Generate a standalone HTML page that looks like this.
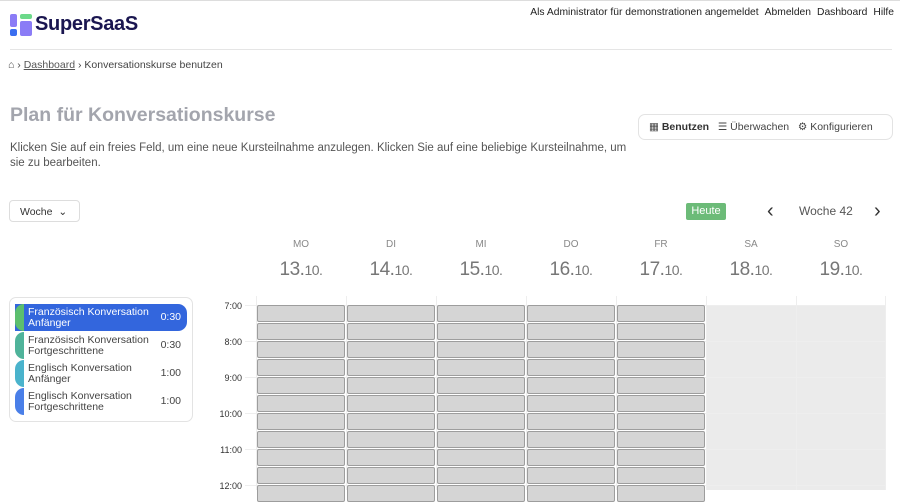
<!DOCTYPE html>
<html><head><meta charset="utf-8"><style>
*{box-sizing:border-box;margin:0;padding:0}
body{width:900px;height:490px;overflow:hidden;background:#fff;font-family:"Liberation Sans",sans-serif;color:#333;position:relative}
.a{position:absolute}
.top{top:0;left:0;width:900px;height:1px;background:#ddd}
.nav{top:7px;right:6px;font-size:10.3px;color:#222}
.nav span{margin-left:6px}
.logo{left:10px;top:14px}
.brand{left:35px;top:13px;font-size:20px;font-weight:bold;color:#1a1650;letter-spacing:-0.3px}
.hr{top:49px;left:10px;width:882px;height:1px;background:#e5e5e5}
.bc{top:59px;left:8px;font-size:10.5px;color:#444}
.bc u{color:#555}
h1{position:absolute;left:10px;top:104px;font-size:19.5px;color:#a3a5ad;font-weight:bold}
.desc{left:10px;top:141px;font-size:11.5px;color:#555;line-height:15px;width:620px}
.tabs{left:638px;top:114px;width:255px;height:26px;border:1px solid #e3e3e3;border-radius:7px;font-size:10.5px;color:#444;padding:6px 0 0 10px;white-space:nowrap}
.tabs b{color:#333}
.woche{left:9px;top:200px;width:71px;height:22px;border:1px solid #ddd;border-radius:4px;font-size:10.5px;padding:5px 0 0 10px;color:#333}
.heute{left:686px;top:203px;width:40px;height:17px;background:#6cbb78;color:#fff;font-size:11px;border-radius:2px;text-align:center;line-height:17px}
.wk{left:799px;top:204px;font-size:12px;color:#555}
.arr{top:199px;font-size:20px;color:#333;line-height:24px}
.day{width:90px;text-align:center;color:#888;font-size:10px;top:239px}
.dt{width:90px;text-align:center;color:#777;font-size:19px;top:259px;letter-spacing:-0.5px}
.dt small{font-size:14px}
.vl{width:1px;background:#eee;top:296px;height:194px}
.we{left:706px;top:305px;width:180px;height:185px;background:#ebebeb}
.col{top:305px;width:90px}
.col div{height:17px;margin:0 1px 1px 1px;background:#d5d5d5;border:1px solid #9d9d9d;border-radius:2px}
.hl{font-size:9px;color:#333;width:30px;text-align:right;left:212px}
.hline{left:245px;width:640px;height:1px;background:#eee}
.list{left:9px;top:297px;width:184px;height:125px;border:1px solid #e3e3e3;border-radius:7px}
.it{left:15px;width:172px;height:27px;font-size:10.5px;line-height:11px;color:#444;border-radius:0 9px 9px 0;padding:3px 0 0 13px}
.it .bar{position:absolute;left:0;top:0;width:9px;height:27px;border-radius:9px 0 0 9px}
.it .t{position:absolute;right:6px;top:8px}
</style></head><body>
<div class="a top"></div>
<div class="a nav">Als Administrator für demonstrationen angemeldet<span>Abmelden</span><span>Dashboard</span><span>Hilfe</span></div>
<svg class="a logo" width="22" height="23" viewBox="0 0 22 23"><rect x="0" y="0" width="7" height="13" rx="2" fill="#8b7cf6"/><rect x="10" y="0" width="12" height="5" rx="2" fill="#6cd98a"/><rect x="10" y="7" width="12" height="15" rx="2" fill="#8b7cf6"/><rect x="0" y="15" width="7" height="7" rx="2" fill="#3a6ef0"/></svg>
<div class="a brand">SuperSaaS</div>
<div class="a hr"></div>
<div class="a bc">⌂ › <u>Dashboard</u> › Konversationskurse benutzen</div>
<h1>Plan für Konversationskurse</h1>
<div class="a desc">Klicken Sie auf ein freies Feld, um eine neue Kursteilnahme anzulegen. Klicken Sie auf eine beliebige Kursteilnahme, um sie zu bearbeiten.</div>
<div class="a tabs">▦ <b>Benutzen</b> &nbsp; ☰ Überwachen &nbsp; ⚙ Konfigurieren</div>
<div class="a woche">Woche &nbsp;⌄</div>
<div class="a heute">Heute</div>
<div class="a arr" style="left:767px">‹</div>
<div class="a wk">Woche 42</div>
<div class="a arr" style="left:874px">›</div>

<div class="a day" style="left:256px">MO</div><div class="a dt" style="left:256px">13.<small>10.</small></div>
<div class="a day" style="left:346px">DI</div><div class="a dt" style="left:346px">14.<small>10.</small></div>
<div class="a day" style="left:436px">MI</div><div class="a dt" style="left:436px">15.<small>10.</small></div>
<div class="a day" style="left:526px">DO</div><div class="a dt" style="left:526px">16.<small>10.</small></div>
<div class="a day" style="left:616px">FR</div><div class="a dt" style="left:616px">17.<small>10.</small></div>
<div class="a day" style="left:706px">SA</div><div class="a dt" style="left:706px">18.<small>10.</small></div>
<div class="a day" style="left:796px">SO</div><div class="a dt" style="left:796px">19.<small>10.</small></div>

<div class="a we"></div>
<div class="a hline" style="top:305px"></div><div class="a hline" style="top:341px"></div><div class="a hline" style="top:377px"></div><div class="a hline" style="top:413px"></div><div class="a hline" style="top:449px"></div><div class="a hline" style="top:485px"></div>
<div class="a vl" style="left:256px"></div><div class="a vl" style="left:346px"></div><div class="a vl" style="left:436px"></div><div class="a vl" style="left:526px"></div><div class="a vl" style="left:616px"></div><div class="a vl" style="left:706px"></div><div class="a vl" style="left:796px"></div><div class="a vl" style="left:885px"></div>

<div class="a col" style="left:256px"><div></div><div></div><div></div><div></div><div></div><div></div><div></div><div></div><div></div><div></div><div></div></div>
<div class="a col" style="left:346px"><div></div><div></div><div></div><div></div><div></div><div></div><div></div><div></div><div></div><div></div><div></div></div>
<div class="a col" style="left:436px"><div></div><div></div><div></div><div></div><div></div><div></div><div></div><div></div><div></div><div></div><div></div></div>
<div class="a col" style="left:526px"><div></div><div></div><div></div><div></div><div></div><div></div><div></div><div></div><div></div><div></div><div></div></div>
<div class="a col" style="left:616px"><div></div><div></div><div></div><div></div><div></div><div></div><div></div><div></div><div></div><div></div><div></div></div>

<div class="a hl" style="top:301px">7:00</div>
<div class="a hl" style="top:337px">8:00</div>
<div class="a hl" style="top:373px">9:00</div>
<div class="a hl" style="top:409px">10:00</div>
<div class="a hl" style="top:445px">11:00</div>
<div class="a hl" style="top:481px">12:00</div>

<div class="a list"></div>
<div class="a it" style="top:304px;background:#3366dd;color:#fff"><span class="bar" style="background:#5cbf6e"></span>Französisch Konversation<br>Anfänger<span class="t">0:30</span></div>
<div class="a it" style="top:332px"><span class="bar" style="background:#4fb39a"></span>Französisch Konversation<br>Fortgeschrittene<span class="t">0:30</span></div>
<div class="a it" style="top:360px"><span class="bar" style="background:#4ab3cc"></span>Englisch Konversation<br>Anfänger<span class="t">1:00</span></div>
<div class="a it" style="top:388px"><span class="bar" style="background:#4a7fe8"></span>Englisch Konversation<br>Fortgeschrittene<span class="t">1:00</span></div>
</body></html>
